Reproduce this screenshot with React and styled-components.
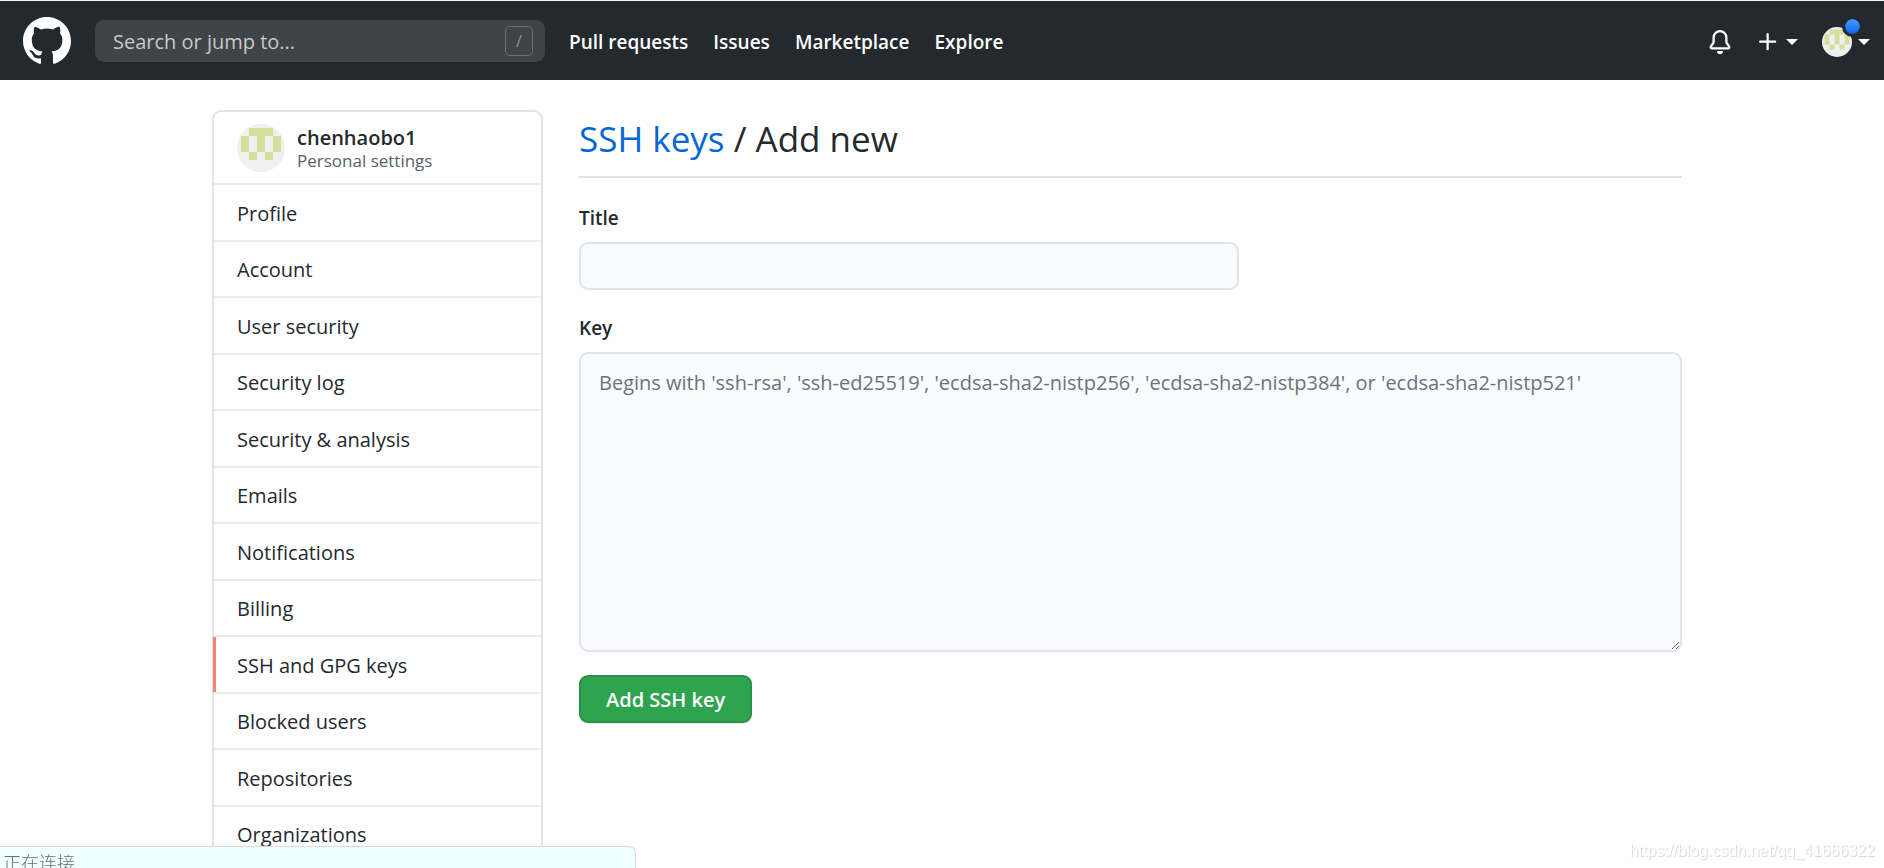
import React from 'react';
import styled, { createGlobalStyle } from "styled-components";

const GlobalStyle = createGlobalStyle`
    * {
        box-sizing: border-box;
    }

    body {
        margin: 0;
        height: 100vh;
        overflow: hidden;
        background-color: #FFFFFF;
        color: #24292E;
        font-family: "Open Sans", "Noto Sans CJK SC", sans-serif;
        font-size: 20px;
        line-height: 30px;
    }

    a {
        text-decoration: none;
    }
`;

const Header = styled.header`
    display: flex;
    align-items: center;
    height: 80px;
    padding: 0 14px 0 23px;
    border-top: 1px solid #E6FBFB;
    background-color: #24292E;
`;

const LogoLink = styled.a`
    display: flex;
    color: #FFFFFF;
    margin-right: 24px;
`;

const SearchBox = styled.label`
    display: flex;
    align-items: center;
    width: 450px;
    height: 42px;
    padding: 0 12px 0 18px;
    border-radius: 9px;
    background-color: #3F4448;
`;

const SearchInput = styled.input`
    flex: 1;
    min-width: 0;
    padding: 2px 0 0;
    border: none;
    outline: none;
    background: none;
    color: #FFFFFF;
    font: inherit;

    &::placeholder {
        color: #C8C9CB;
        opacity: 1;
    }
`;

const SlashKey = styled.kbd`
    width: 28px;
    height: 30px;
    border: 1px solid #6A6F74;
    border-radius: 5px;
    color: #8D9195;
    font-family: inherit;
    font-size: 16px;
    line-height: 29px;
    text-align: center;
`;

const HeaderNav = styled.nav`
    display: flex;
    gap: 25px;
    margin-left: 24px;
    padding-top: 2px;
`;

const HeaderLink = styled.a`
    color: #FFFFFF;
    font-size: 19px;
    font-weight: 600;
`;

const HeaderActions = styled.div`
    display: flex;
    align-items: center;
    gap: 24px;
    margin-left: auto;
    padding-top: 2px;
`;

const HeaderButton = styled.button`
    display: flex;
    align-items: center;
    gap: 6px;
    padding: 0;
    border: none;
    background: none;
    color: #FFFFFF;
    cursor: pointer;
`;

const Caret = styled.span`
    border: 6px solid transparent;
    border-top-color: #FFFFFF;
    border-bottom: none;
`;

const AvatarHolder = styled.span`
    display: flex;
    position: relative;
`;

const StatusDot = styled.span`
    position: absolute;
    top: -11px;
    right: -11px;
    width: 21px;
    height: 21px;
    border: 3px solid #24292E;
    border-radius: 50%;
    background: linear-gradient(#4A9BFF, #0366F0) padding-box;
`;

const Page = styled.div`
    display: flex;
    align-items: flex-start;
    gap: 36px;
    max-width: 1480px;
    margin: 0 auto;
    padding: 30px 0 0 10px;
`;

const Sidebar = styled.nav`
    flex: 0 0 331px;
    border: 2px solid #E1E4E8;
    border-radius: 9px;
`;

const Profile = styled.div`
    display: flex;
    align-items: center;
    gap: 12px;
    height: 71px;
    padding: 0 23px;
`;

const UserText = styled.div`
    padding-top: 3px;
`;

const UserName = styled.div`
    font-weight: 600;
    line-height: 24px;
`;

const UserNote = styled.div`
    color: #586069;
    font-size: 17px;
    line-height: 22px;
`;

const Menu = styled.div`
    display: grid;
    grid-auto-rows: 57px 56px;
`;

const MenuLink = styled.a`
    display: flex;
    align-items: center;
    position: relative;
    padding: 2px 23px 0;
    border-top: 2px solid #EAECEF;
    color: #24292E;

    &::before {
        content: "";
        display: ${props => props.$selected ? "block" : "none"};
        position: absolute;
        top: 0;
        bottom: 0;
        left: -1px;
        width: 3px;
        background-color: #F9826C;
    }
`;

const Content = styled.main`
    flex: 1;
    min-width: 0;
`;

const Heading = styled.h2`
    margin: 0 0 25px;
    padding: 2px 0 10px;
    border-bottom: 2px solid #E1E4E8;
    font-size: 35px;
    font-weight: 400;
    line-height: 54px;

    a {
        color: #0366D6;
    }
`;

const Form = styled.form`
    display: flex;
    flex-direction: column;
    align-items: flex-start;
`;

const FieldLabel = styled.label`
    margin-bottom: 9px;
    font-size: 19px;
    font-weight: 600;
`;

const TitleInput = styled.input`
    width: 660px;
    max-width: 100%;
    height: 48px;
    margin-bottom: 23px;
    padding: 8px 18px;
    border: 2px solid #E1E4E8;
    border-radius: 9px;
    background-color: #FAFBFC;
    font: inherit;
`;

const KeyInput = styled.textarea`
    width: 100%;
    height: 300px;
    margin-bottom: 23px;
    padding: 14px 18px;
    border: 2px solid #E1E4E8;
    border-radius: 9px;
    background-color: #FAFBFC;
    font: inherit;
    resize: vertical;

    &::placeholder {
        color: #6A737D;
        opacity: 1;
    }
`;

const SubmitButton = styled.button`
    height: 48px;
    padding: 2px 25px 0;
    border: 2px solid #2A8F47;
    border-radius: 9px;
    background-color: #2EA44F;
    box-shadow: 0 1px 1px rgba(27, 31, 35, 0.1);
    color: #FFFFFF;
    font: inherit;
    font-weight: 600;
    cursor: pointer;
`;

const LoadingBar = styled.div`
    position: fixed;
    bottom: 0;
    left: 0;
    width: 636px;
    height: 22px;
    padding: 0 3px;
    border: 1px solid #D5DCDC;
    border-bottom: none;
    border-left: none;
    border-radius: 0 7px 0 0;
    background-color: #F0FFFF;
    color: #5F7272;
    font-family: "Noto Sans CJK SC", sans-serif;
    font-size: 18px;
    font-weight: 300;
`;

const Watermark = styled.div`
    position: fixed;
    right: 9px;
    bottom: 2px;
    color: #FFFFFF;
    font-family: "Liberation Sans", sans-serif;
    font-size: 16px;
    text-shadow: 1px 1px 1px #D4D4D4;
`;

const GitHubMark = () => (
    <svg width="48" height="48" viewBox="0 0 16 16" fill="currentColor" aria-hidden="true">
        <path fillRule="evenodd" d="M8 0C3.58 0 0 3.58 0 8c0 3.54 2.29 6.53 5.47 7.59.4.07.55-.17.55-.38 0-.19-.01-.82-.01-1.49-2.01.37-2.53-.49-2.69-.94-.09-.23-.48-.94-.82-1.13-.28-.15-.68-.52-.01-.53.63-.01 1.08.58 1.23.82.72 1.21 1.87.87 2.33.66.07-.52.28-.87.51-1.07-1.78-.2-3.64-.89-3.64-3.95 0-.87.31-1.59.82-2.15-.08-.2-.36-1.02.08-2.12 0 0 .67-.21 2.2.82.64-.18 1.32-.27 2-.27.68 0 1.36.09 2 .27 1.53-1.04 2.2-.82 2.2-.82.44 1.1.16 1.92.08 2.12.51.56.82 1.27.82 2.15 0 3.07-1.87 3.75-3.65 3.95.29.25.54.73.54 1.48 0 1.07-.01 1.93-.01 2.2 0 .21.15.46.55.38A8.013 8.013 0 0016 8c0-4.42-3.58-8-8-8z" />
    </svg>
);

const BellIcon = () => (
    <svg width="24" height="24" viewBox="0 0 16 16" fill="currentColor" aria-hidden="true">
        <path d="M8 16a2 2 0 001.985-1.75c.017-.137-.097-.25-.235-.25h-3.5c-.138 0-.252.113-.235.25A2 2 0 008 16z" />
        <path fillRule="evenodd" d="M8 1.5A3.5 3.5 0 004.5 5v2.947c0 .346-.102.683-.294.97l-1.703 2.556a.018.018 0 00-.003.01l.001.006c0 .002.002.004.004.006a.017.017 0 00.006.004l.007.001h10.964l.007-.001a.016.016 0 00.006-.004.016.016 0 00.004-.006l.001-.007a.017.017 0 00-.003-.01l-1.703-2.554a1.75 1.75 0 01-.294-.97V5A3.5 3.5 0 008 1.5zM3 5a5 5 0 0110 0v2.947c0 .05.015.098.042.139l1.703 2.555A1.518 1.518 0 0113.482 13H2.518a1.518 1.518 0 01-1.263-2.36l1.703-2.554A.25.25 0 003 7.947V5z" />
    </svg>
);

const PlusIcon = () => (
    <svg width="24" height="24" viewBox="0 0 16 16" fill="currentColor" aria-hidden="true">
        <path fillRule="evenodd" d="M7.75 2a.75.75 0 01.75.75V7h4.25a.75.75 0 110 1.5H8.5v4.25a.75.75 0 11-1.5 0V8.5H2.75a.75.75 0 010-1.5H7V2.75A.75.75 0 017.75 2z" />
    </svg>
);

const Avatar = ({ size }) => (
    <svg width={ size } height={ size } viewBox="0 0 48 48" aria-hidden="true">
        <circle cx="24" cy="24" r="24" fill="#F0F0F0" />
        <path fill="#D4DF9C" d="M12 4h24v8H12zM4 12h8v16H4zM20 12h8v16h-8zM36 12h8v16h-8zM12 28h8v8h-8zM28 28h8v8h-8z" />
    </svg>
);

const headerLinks = ["Pull requests", "Issues", "Marketplace", "Explore"];

const menuItems = [
    "Profile",
    "Account",
    "User security",
    "Security log",
    "Security & analysis",
    "Emails",
    "Notifications",
    "Billing",
    "SSH and GPG keys",
    "Blocked users",
    "Repositories",
    "Organizations",
];

export default class App extends React.Component {
    render() {
        return(
            <>
                <GlobalStyle />
                <Header>
                    <LogoLink href="#" aria-label="Homepage"><GitHubMark /></LogoLink>
                    <SearchBox>
                        <SearchInput type="text" placeholder="Search or jump to..." aria-label="Search or jump to" />
                        <SlashKey>/</SlashKey>
                    </SearchBox>
                    <HeaderNav>
                        { headerLinks.map(link => <HeaderLink key={ link } href="#">{ link }</HeaderLink>) }
                    </HeaderNav>
                    <HeaderActions>
                        <HeaderButton aria-label="Notifications"><BellIcon /></HeaderButton>
                        <HeaderButton aria-label="Create new"><PlusIcon /><Caret /></HeaderButton>
                        <HeaderButton aria-label="Account menu">
                            <AvatarHolder>
                                <Avatar size={ 30 } />
                                <StatusDot />
                            </AvatarHolder>
                            <Caret />
                        </HeaderButton>
                    </HeaderActions>
                </Header>
                <Page>
                    <Sidebar aria-label="Personal settings">
                        <Profile>
                            <Avatar size={ 48 } />
                            <UserText>
                                <UserName>chenhaobo1</UserName>
                                <UserNote>Personal settings</UserNote>
                            </UserText>
                        </Profile>
                        <Menu>
                            { menuItems.map(item => (
                                <MenuLink key={ item } href="#" $selected={ item === "SSH and GPG keys" }>{ item }</MenuLink>
                            )) }
                        </Menu>
                    </Sidebar>
                    <Content>
                        <Heading><a href="#">SSH keys</a> / Add new</Heading>
                        <Form>
                            <FieldLabel htmlFor="key-title">Title</FieldLabel>
                            <TitleInput id="key-title" type="text" />
                            <FieldLabel htmlFor="key-value">Key</FieldLabel>
                            <KeyInput
                                id="key-value"
                                placeholder="Begins with 'ssh-rsa', 'ssh-ed25519', 'ecdsa-sha2-nistp256', 'ecdsa-sha2-nistp384', or 'ecdsa-sha2-nistp521'"
                            />
                            <SubmitButton type="button">Add SSH key</SubmitButton>
                        </Form>
                    </Content>
                </Page>
                <LoadingBar>正在连接</LoadingBar>
                <Watermark>https://blog.csdn.net/qq_41666322</Watermark>
            </>
        )
    }
}
